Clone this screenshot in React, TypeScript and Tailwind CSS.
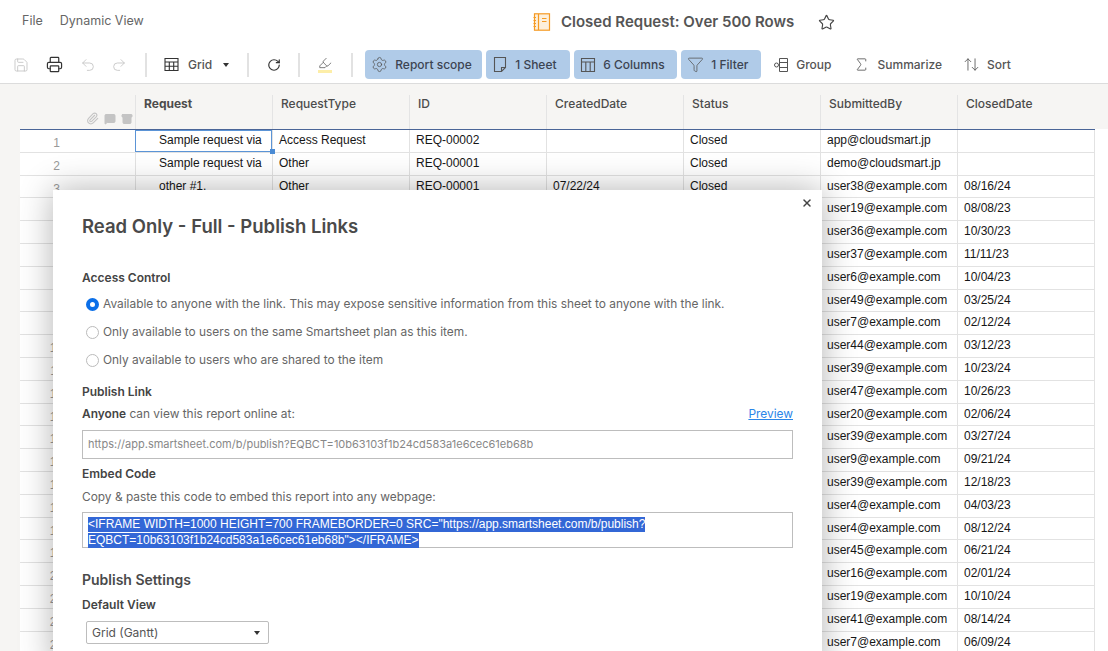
import React from 'react';
import {
  Save,
  Printer,
  Undo2,
  Redo2,
  RotateCw,
  Highlighter,
  Settings,
  Funnel,
  Sigma,
  ArrowUpDown,
  X,
  Star,
  Paperclip,
  MessageSquare,
  Archive,
} from 'lucide-react';

const columns = ['Request', 'RequestType', 'ID', 'CreatedDate', 'Status', 'SubmittedBy', 'ClosedDate'];

const rows: string[][] = [
  ['Sample request via', 'Access Request', 'REQ-00002', '', 'Closed', 'app@cloudsmart.jp', ''],
  ['Sample request via', 'Other', 'REQ-00001', '', 'Closed', 'demo@cloudsmart.jp', ''],
  ['other #1.', 'Other', 'REQ-00001', '07/22/24', 'Closed', 'user38@example.com', '08/16/24'],
  ['', '', '', '', '', 'user19@example.com', '08/08/23'],
  ['', '', '', '', '', 'user36@example.com', '10/30/23'],
  ['', '', '', '', '', 'user37@example.com', '11/11/23'],
  ['', '', '', '', '', 'user6@example.com', '10/04/23'],
  ['', '', '', '', '', 'user49@example.com', '03/25/24'],
  ['', '', '', '', '', 'user7@example.com', '02/12/24'],
  ['', '', '', '', '', 'user44@example.com', '03/12/23'],
  ['', '', '', '', '', 'user39@example.com', '10/23/24'],
  ['', '', '', '', '', 'user47@example.com', '10/26/23'],
  ['', '', '', '', '', 'user20@example.com', '02/06/24'],
  ['', '', '', '', '', 'user39@example.com', '03/27/24'],
  ['', '', '', '', '', 'user9@example.com', '09/21/24'],
  ['', '', '', '', '', 'user39@example.com', '12/18/23'],
  ['', '', '', '', '', 'user4@example.com', '04/03/23'],
  ['', '', '', '', '', 'user4@example.com', '08/12/24'],
  ['', '', '', '', '', 'user45@example.com', '06/21/24'],
  ['', '', '', '', '', 'user16@example.com', '02/01/24'],
  ['', '', '', '', '', 'user19@example.com', '10/10/24'],
  ['', '', '', '', '', 'user41@example.com', '08/14/24'],
  ['', '', '', '', '', 'user7@example.com', '06/09/24'],
];

function Logo() {
  return (
    <svg width="18" height="18" viewBox="0 0 18 18" fill="none" stroke="#f59a23" strokeWidth="1.2">
      <rect x="1.5" y="0.8" width="15" height="16.4" fill="#fdf0dc" />
      <path d="M5.5 1v16M0.5 4.5h2.5M0.5 7.5h2.5M0.5 10.5h2.5M0.5 13.5h2.5M9 5.5h4.5M9 8.5h4.5" />
    </svg>
  );
}

function GroupIcon() {
  return (
    <svg width="16" height="16" viewBox="0 0 16 16" fill="none" stroke="#555" strokeWidth="1">
      <path d="M6.5 1.5h8v13h-8zM6.5 5.5h8M6.5 10.5h8" />
      <circle cx="3.5" cy="8" r="2" />
    </svg>
  );
}

function GridIcon() {
  return (
    <svg width="15" height="15" viewBox="0 0 15 15" fill="none" stroke="#333" strokeWidth="1.1">
      <path d="M1 1.5h13v12H1zM1 5h13M1 9.2h13M5.3 5v8.5M9.7 5v8.5" />
    </svg>
  );
}

function SheetIcon() {
  return (
    <svg width="16" height="17" viewBox="0 0 16 17" fill="none" stroke="#555" strokeWidth="1.1">
      <path d="M2.5 1.5h11v10l-4 4h-7zM13.5 11.5h-4v4" />
    </svg>
  );
}

function ColumnsIcon() {
  return (
    <svg width="16" height="16" viewBox="0 0 16 16" fill="none" stroke="#555" strokeWidth="1.1">
      <path d="M1.5 1.5h13v13h-13zM1.5 5h13M5.8 5v9.5M10.2 5v9.5" />
    </svg>
  );
}

function Sep() {
  return <div className="w-[2px] h-[24px] bg-[#e2e2e2]" />;
}

function ScopeButton({ icon, label, width }: { icon: React.ReactNode; label: string; width: string }) {
  return (
    <div className={`${width} h-[29px] rounded-[4px] bg-[#b0cbe8] flex items-center pl-[6px] gap-[7px] text-[12px] font-medium text-[#3c4452]`}>
      {icon}
      <span>{label}</span>
    </div>
  );
}

function PlainButton({ icon, label, className }: { icon: React.ReactNode; label: string; className: string }) {
  return (
    <div className={`flex items-center gap-[7px] text-[12px] font-medium text-[#555] ${className}`}>
      {icon}
      <span>{label}</span>
    </div>
  );
}

function Radio({ checked, label }: { checked?: boolean; label: string }) {
  return (
    <div className="flex items-center h-[16px] pl-[4px] gap-[4px]">
      {checked ? (
        <div className="w-[13px] h-[13px] rounded-full border-[4px] border-[#0b6fe8] bg-white" />
      ) : (
        <div className="w-[13px] h-[13px] rounded-full border border-[#bbb] bg-white" />
      )}
      <span className="text-[11.9px] text-[#666]">{label}</span>
    </div>
  );
}

function Label({ children, className = '' }: { children: React.ReactNode; className?: string }) {
  return <div className={`text-[12px] font-semibold text-[#444] leading-[16px] ${className}`}>{children}</div>;
}

export default function App() {
  return (
    <div className="relative w-[1108px] h-[651px] overflow-hidden bg-white font-['Inter',sans-serif]">
      {/* top bar */}
      <div className="h-[84px] border-b border-[#dcdcdc] flex flex-col">
        <div className="relative h-[44px] flex items-start pt-[12px] pl-[22px] gap-[17px] text-[12.5px] text-[#666]">
          <span>File</span>
          <span>Dynamic View</span>
          <div className="absolute left-[533px] top-[11px] flex items-center gap-[10px]">
            <Logo />
            <span className="text-[15px] font-semibold text-[#555] whitespace-nowrap">Closed Request: Over 500 Rows</span>
            <Star size={17} strokeWidth={1.6} className="text-[#444] ml-[14px]" />
          </div>
        </div>
        <div className="h-[35px] flex items-center mt-[3px]">
          <Save size={16} strokeWidth={1.3} className="ml-[13px] text-[#c4c4c4]" />
          <Printer size={17} strokeWidth={1.7} className="ml-[17px] text-[#333]" />
          <Undo2 size={16} strokeWidth={1.3} className="ml-[17px] text-[#c4c4c4]" />
          <Redo2 size={16} strokeWidth={1.3} className="ml-[15px] text-[#c4c4c4]" />
          <div className="ml-[18px]"><Sep /></div>
          <div className="ml-[17px]"><GridIcon /></div>
          <span className="ml-[9px] text-[12px] font-medium text-[#555]">Grid</span>
          <span className="ml-[11px] w-0 h-0 border-x-[3px] border-x-transparent border-t-[4px] border-t-[#333]" />
          <div className="ml-[18px]"><Sep /></div>
          <RotateCw size={14} strokeWidth={2} className="ml-[18px] text-[#333]" />
          <div className="ml-[17px]"><Sep /></div>
          <div className="ml-[18px] flex flex-col items-center">
            <Highlighter size={14} strokeWidth={1.3} className="text-[#555]" />
            <div className="w-[14px] h-[3px] bg-[#fdeea8]" />
          </div>
          <div className="ml-[19px]"><Sep /></div>
          <div className="ml-[12px] flex gap-[4px]">
            <ScopeButton width="w-[117px]" icon={<Settings size={17} strokeWidth={1.1} className="text-[#555]" />} label="Report scope" />
            <ScopeButton width="w-[84px]" icon={<SheetIcon />} label="1 Sheet" />
            <ScopeButton width="w-[103px]" icon={<ColumnsIcon />} label="6 Columns" />
            <ScopeButton width="w-[80px]" icon={<Funnel size={17} strokeWidth={1.1} className="text-[#555]" />} label="1 Filter" />
          </div>
          <PlainButton className="ml-[12px]" icon={<GroupIcon />} label="Group" />
          <PlainButton className="ml-[21px] gap-[8px]" icon={<Sigma size={17} strokeWidth={1.2} />} label="Summarize" />
          <PlainButton className="ml-[21px]" icon={<ArrowUpDown size={17} strokeWidth={1.2} />} label="Sort" />
        </div>
      </div>

      {/* grid header */}
      <div className="h-[45px] bg-[#f6f5f3] flex pt-[11px]">
        <div className="w-[135px] relative">
          <div className="absolute right-[2px] bottom-[4px] flex items-center gap-[5px] text-[#c4c4c4]">
            <Paperclip size={13} strokeWidth={2} />
            <MessageSquare size={12} fill="#c4c4c4" />
            <Archive size={12} fill="#c4c4c4" />
          </div>
        </div>
        {columns.map((c, i) => (
          <div
            key={c}
            className={`w-[137px] border-l border-[#e4e4e4] pl-[8px] text-[12px] ${i === 0 ? 'font-bold' : 'font-medium'} text-[#4c4c4c]`}
          >
            {c}
          </div>
        ))}
      </div>

      {/* grid body */}
      <div className="flex">
        <div className="w-[20px] bg-[#f6f5f3] h-[522px]" />
        <div className="w-[1075px] border-t border-[#4a6597] border-r-0">
          {rows.map((r, i) => (
            <div key={i} className="flex h-[22.8px] border-b border-[#e2e2e2] border-r text-[12px] leading-[20px] text-[#161616] font-['Liberation_Sans',sans-serif]">
              <div className="w-[115px] text-center pr-[42px] pt-[3px] text-[#999]">{i + 1}</div>
              {r.map((cell, j) => (
                <div
                  key={j}
                  className={`relative w-[137px] border-l border-[#e2e2e2] overflow-hidden whitespace-nowrap ${j === 0 ? 'pl-[23px]' : 'pl-[6px]'} ${i === 0 && j === 0 ? 'outline outline-1 outline-[#5b94d6] -outline-offset-1' : ''}`}
                >
                  {cell}
                </div>
              ))}
            </div>
          ))}
        </div>
      </div>
      <div className="absolute left-[270px] top-[149px] w-[5px] h-[5px] bg-[#4a8bd4]" />

      {/* publish dialog */}
      <div className="absolute left-[53px] top-[190px] w-[769px] h-[480px] bg-white shadow-[0_0_32px_rgba(0,0,0,0.3)] pl-[29px] pr-[29px]">
        <X size={12} strokeWidth={3} className="absolute right-[9px] top-[7px] text-[#444]" />
        <div className="mt-[25px] text-[18.5px] leading-[22px] font-semibold text-[#4a4a4a]">Read Only - Full - Publish Links</div>
        <Label className="mt-[33px]">Access Control</Label>
        <div className="mt-[10px] flex flex-col gap-[12px]">
          <Radio checked label="Available to anyone with the link. This may expose sensitive information from this sheet to anyone with the link." />
          <Radio label="Only available to users on the same Smartsheet plan as this item." />
          <Radio label="Only available to users who are shared to the item" />
        </div>
        <Label className="mt-[16px]">Publish Link</Label>
        <div className="mt-[6px] flex justify-between text-[11.9px] leading-[16px] text-[#666]">
          <span><span className="font-semibold text-[#444]">Anyone</span> can view this report online at:</span>
          <span className="underline text-[#2b86e8]">Preview</span>
        </div>
        <div className="mt-[8px] h-[29px] border border-[#bdbdbd] flex items-center pl-[5px] text-[11px] text-[#888]">
          https://app.smartsheet.com/b/publish?EQBCT=10b63103f1b24cd583a1e6cec61eb68b
        </div>
        <Label className="mt-[7px]">Embed Code</Label>
        <div className="mt-[7px] text-[11.9px] leading-[16px] text-[#666]">Copy &amp; paste this code to embed this report into any webpage:</div>
        <div className="mt-[7px] h-[36px] border border-[#bdbdbd] pl-[5px] pt-[4px] text-[12px] text-white font-['Liberation_Sans',sans-serif]">
          <div className="w-fit h-[15px] leading-[15px] bg-[#3367d6]">&lt;IFRAME WIDTH=1000 HEIGHT=700 FRAMEBORDER=0 SRC="https://app.smartsheet.com/b/publish?</div>
          <div className="w-fit h-[15px] leading-[15px] mt-[1px] bg-[#3367d6]">EQBCT=10b63103f1b24cd583a1e6cec61eb68b"&gt;&lt;/IFRAME&gt;</div>
        </div>
        <div className="mt-[23px] text-[14px] leading-[18px] font-semibold text-[#4a4a4a]">Publish Settings</div>
        <Label className="mt-[8px]">Default View</Label>
        <div className="mt-[8px] ml-[4px] w-[183px] h-[23px] border border-[#bdbdbd] rounded-[2px] flex items-center justify-between pl-[5px] pr-[8px] text-[12px] text-[#555]">
          <span>Grid (Gantt)</span>
          <span className="w-0 h-0 border-x-[3px] border-x-transparent border-t-[4px] border-t-[#333]" />
        </div>
      </div>
    </div>
  );
}
